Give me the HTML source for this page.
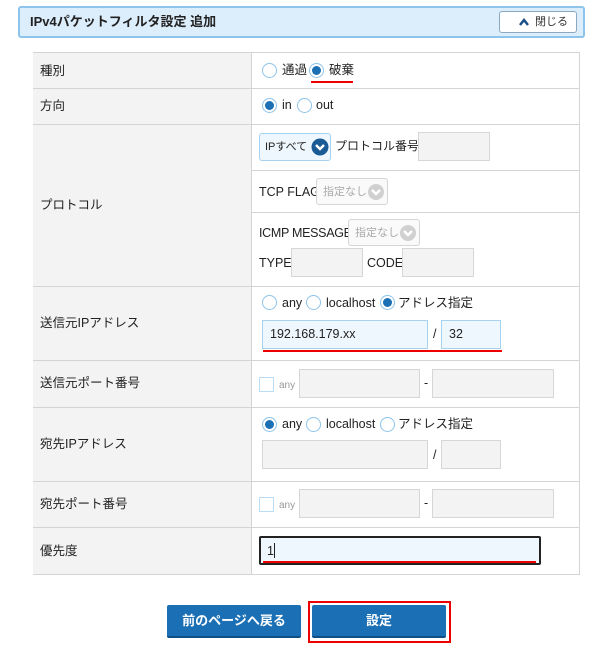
<!DOCTYPE html><html><head><meta charset="utf-8"><style>
*{box-sizing:border-box;margin:0;padding:0}
body{width:600px;height:651px;background:#fff;position:relative;font-family:"Liberation Sans","Noto Sans CJK JP",sans-serif;font-size:12.5px;color:#222;overflow:hidden}
.a{position:absolute}
.hl{position:absolute;left:33px;width:547px;height:1px;background:#d4d4d4}
.lab{position:absolute;left:33px;width:218px;background:#f3f3f3}
.t{position:absolute;white-space:nowrap;line-height:14px}
.r{position:absolute;width:15px;height:15px;border:1px solid #8cc4ea;border-radius:50%;background:#fff}
.r.on::after{content:"";position:absolute;left:2px;top:2px;width:9px;height:9px;border-radius:50%;background:#1a6fb5}
.in{position:absolute;background:#f3f3f3;border:1px solid #d6d6d6}
.bl{background:#eef7fd;border:1px solid #a6d2f0}
.cb{position:absolute;width:15px;height:15px;border:1px solid #b8dcf4;background:#fff}
.red{position:absolute;height:2px;background:#e00}
.btn{position:absolute;background:#1a6fb5;color:#fff;font-weight:bold;font-size:13px;text-align:center;line-height:32px;border-radius:2px;border-bottom:2px solid #0f4f86}
</style></head><body>
<div class="a" style="left:18px;top:6px;width:567px;height:32px;background:#dcedfb;border:2px solid #8ec4ec;border-radius:3px"></div>
<div class="t" style="left:30px;top:15px;font-weight:bold;font-size:13px">IPv4パケットフィルタ設定 追加</div>
<div class="a" style="left:499px;top:11px;width:78px;height:22px;background:#fff;border:1px solid #8aa9c0;border-radius:3px"></div>
<svg class="a" style="left:518px;top:17px" width="12" height="10"><path d="M2 8 L6 3 L10 8" stroke="#1a4f86" stroke-width="2.5" fill="none"/></svg>
<div class="t" style="left:535px;top:15px;font-size:11px;color:#333">閉じる</div>

<div class="a" style="left:33px;top:52px;width:547px;height:523px;border:1px solid #d4d4d4"></div>
<div class="lab" style="top:53px;height:521px"></div>
<div class="a" style="left:251px;top:52px;width:1px;height:522px;background:#d4d4d4"></div>
<div class="hl" style="top:88px"></div><div class="hl" style="top:124px"></div>
<div class="hl" style="top:286px"></div><div class="hl" style="top:360px"></div>
<div class="hl" style="top:407px"></div><div class="hl" style="top:481px"></div><div class="hl" style="top:527px"></div>
<div class="a" style="left:252px;top:170px;width:328px;height:1px;background:#d4d4d4"></div>
<div class="a" style="left:252px;top:212px;width:328px;height:1px;background:#d4d4d4"></div>

<div class="t" style="left:40px;top:64px">種別</div>
<div class="t" style="left:40px;top:99px">方向</div>
<div class="t" style="left:40px;top:198px">プロトコル</div>
<div class="t" style="left:40px;top:316px">送信元IPアドレス</div>
<div class="t" style="left:40px;top:376px">送信元ポート番号</div>
<div class="t" style="left:40px;top:437px">宛先IPアドレス</div>
<div class="t" style="left:40px;top:497px">宛先ポート番号</div>
<div class="t" style="left:40px;top:544px">優先度</div>

<div class="r" style="left:262px;top:63px"></div><div class="t" style="left:282px;top:63px">通過</div>
<div class="r on" style="left:309px;top:63px"></div><div class="t" style="left:329px;top:63px">破棄</div>
<div class="red" style="left:311px;top:81px;width:42px"></div>
<div class="r on" style="left:262px;top:98px"></div><div class="t" style="left:282px;top:98px">in</div>
<div class="r" style="left:297px;top:98px"></div><div class="t" style="left:316px;top:98px">out</div>

<div class="a bl" style="left:259px;top:133px;width:72px;height:28px;border-radius:3px"></div>
<div class="t" style="left:265px;top:140px;font-size:11px">IPすべて</div>
<svg class="a" style="left:311px;top:138px" width="18" height="18"><circle cx="9" cy="9" r="8.5" fill="#1a5a95"/><path d="M5 7 L9 11 L13 7" stroke="#fff" stroke-width="2.5" fill="none"/></svg>
<div class="t" style="left:335px;top:139px;font-size:12px">プロトコル番号</div>
<div class="in" style="left:418px;top:132px;width:72px;height:29px"></div>
<div class="t" style="left:259px;top:185px">TCP FLAG</div>
<div class="in" style="left:316px;top:178px;width:72px;height:27px;background:#fafafa;border-radius:3px"></div>
<div class="t" style="left:323px;top:185px;font-size:11px;color:#aaa">指定なし</div>
<svg class="a" style="left:367px;top:183px" width="18" height="18"><circle cx="9" cy="9" r="8" fill="#d0d0d0"/><path d="M5 7 L9 11 L13 7" stroke="#fff" stroke-width="2.5" fill="none"/></svg>
<div class="t" style="left:259px;top:226px;letter-spacing:-0.3px">ICMP MESSAGE</div>
<div class="in" style="left:348px;top:219px;width:72px;height:27px;background:#fafafa;border-radius:3px"></div>
<div class="t" style="left:355px;top:226px;font-size:11px;color:#aaa">指定なし</div>
<svg class="a" style="left:399px;top:224px" width="18" height="18"><circle cx="9" cy="9" r="8" fill="#d0d0d0"/><path d="M5 7 L9 11 L13 7" stroke="#fff" stroke-width="2.5" fill="none"/></svg>
<div class="t" style="left:259px;top:256px">TYPE</div>
<div class="in" style="left:291px;top:248px;width:72px;height:29px"></div>
<div class="t" style="left:367px;top:256px">CODE</div>
<div class="in" style="left:402px;top:248px;width:72px;height:29px"></div>

<div class="r" style="left:262px;top:295px"></div><div class="t" style="left:282px;top:296px">any</div>
<div class="r" style="left:306px;top:295px"></div><div class="t" style="left:326px;top:296px">localhost</div>
<div class="r on" style="left:380px;top:295px"></div><div class="t" style="left:398px;top:296px">アドレス指定</div>
<div class="a bl" style="left:262px;top:320px;width:166px;height:29px"></div>
<div class="t" style="left:270px;top:327px">192.168.179.xx</div>
<div class="t" style="left:433px;top:327px">/</div>
<div class="a bl" style="left:441px;top:320px;width:60px;height:29px"></div>
<div class="t" style="left:449px;top:327px">32</div>
<div class="red" style="left:263px;top:350px;width:239px"></div>

<div class="cb" style="left:259px;top:377px"></div><div class="t" style="left:279px;top:379px;font-size:10px;color:#999">any</div>
<div class="in" style="left:299px;top:369px;width:121px;height:29px"></div>
<div class="t" style="left:424px;top:376px">-</div>
<div class="in" style="left:432px;top:369px;width:122px;height:29px"></div>

<div class="r on" style="left:262px;top:417px"></div><div class="t" style="left:282px;top:417px">any</div>
<div class="r" style="left:306px;top:417px"></div><div class="t" style="left:326px;top:417px">localhost</div>
<div class="r" style="left:380px;top:417px"></div><div class="t" style="left:398px;top:417px">アドレス指定</div>
<div class="in" style="left:262px;top:440px;width:166px;height:29px"></div>
<div class="t" style="left:433px;top:448px">/</div>
<div class="in" style="left:441px;top:440px;width:60px;height:29px"></div>

<div class="cb" style="left:259px;top:497px"></div><div class="t" style="left:279px;top:499px;font-size:10px;color:#999">any</div>
<div class="in" style="left:299px;top:489px;width:121px;height:29px"></div>
<div class="t" style="left:424px;top:496px">-</div>
<div class="in" style="left:432px;top:489px;width:122px;height:29px"></div>

<div class="a" style="left:259px;top:536px;width:282px;height:29px;background:#eef7fd;border:2px solid #222;border-radius:2px"></div>
<div class="t" style="left:267px;top:544px">1</div>
<div class="a" style="left:274px;top:543px;width:1px;height:15px;background:#222"></div>
<div class="red" style="left:263px;top:561px;width:273px"></div>

<div class="btn" style="left:167px;top:605px;width:134px;height:33px">前のページへ戻る</div>
<div class="a" style="left:308px;top:601px;width:143px;height:42px;border:2px solid #e00"></div>
<div class="btn" style="left:312px;top:605px;width:134px;height:33px">設定</div>
</body></html>
